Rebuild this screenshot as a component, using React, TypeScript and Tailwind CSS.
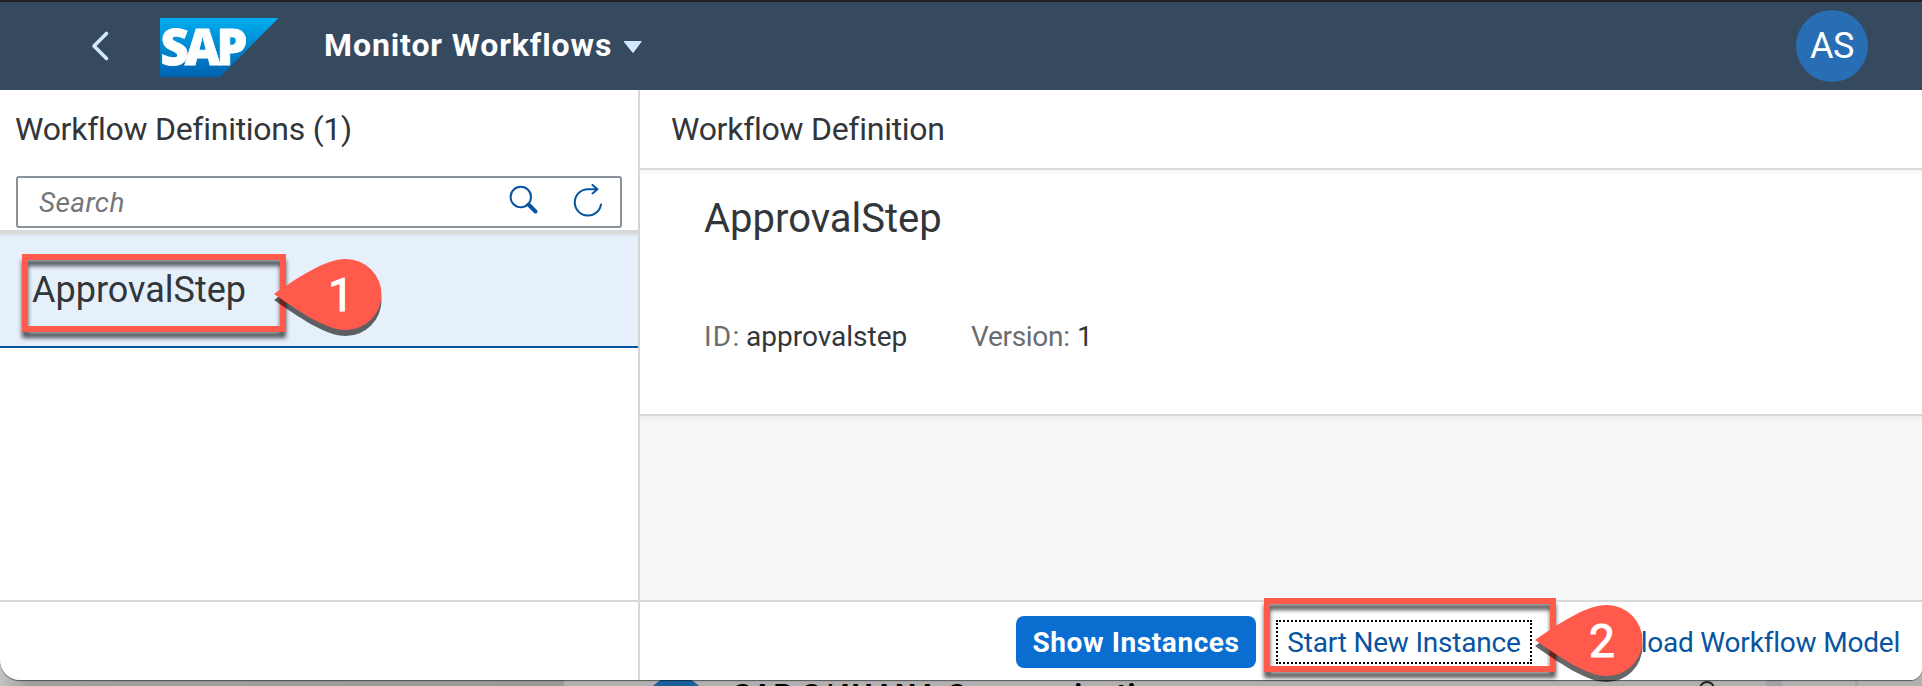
import React from 'react';

function Pin({ label, className }: { label: string; className: string }) {
  return (
    <svg className={className} width="108" height="82" viewBox="0 0 108 82">
      <path
        d="M0 41 C25 24 51 6 72 6 A35.5 35.5 0 0 1 72 77 C51 77 25 58 0 41Z"
        fill="#000"
        opacity="0.6"
      />
      <path
        d="M0 35 C25 18 51 0 72 0 A35.5 35.5 0 0 1 72 71 C51 71 25 52 0 35Z"
        fill="#ff5a4c"
      />
      <text x="67" y="52" textAnchor="middle" fontSize="46" fontWeight="400" stroke="#fff" strokeWidth="1" fill="#fff" fontFamily="Roboto, sans-serif">
        {label}
      </text>
    </svg>
  );
}

function Header() {
  return (
    <header className="flex h-[90px] shrink-0 items-center border-t-2 border-[#222222] bg-[#354a5f] pb-[2px] pl-[90px] pr-[54px]">
      <svg className="mt-[2px]" width="20" height="32" viewBox="0 0 20 32" fill="none" stroke="#d1e8ff" strokeWidth="3.6" strokeLinecap="round" strokeLinejoin="round">
        <path d="M16.5 3.5 L4 16 L16.5 28.5" />
      </svg>
      <svg className="ml-[50px] mt-[5px]" width="119" height="59" viewBox="0 0 119 59">
        <defs>
          <linearGradient id="logoFill" x1="0" y1="0" x2="0" y2="1">
            <stop offset="0" stopColor="#00aeef" />
            <stop offset="0.5" stopColor="#0087cf" />
            <stop offset="1" stopColor="#0062b1" />
          </linearGradient>
        </defs>
        <path d="M0 0 H118.5 L60 59 H0Z" fill="url(#logoFill)" />
        <text x="0.5" y="46.5" fontSize="49" fontWeight="900" fill="#fff" stroke="#fff" strokeWidth="0.8" fontFamily="'Noto Sans', sans-serif" textLength="87" lengthAdjust="spacing">
          SAP
        </text>
      </svg>
      <h1 className="ml-[45px] w-[299px] whitespace-nowrap text-[32px] font-bold leading-none tracking-[0.9px] text-white">Monitor Workflows</h1>
      <svg className="mt-[3px]" width="20" height="14" viewBox="0 0 20 14">
        <path d="M1.5 1 H18 Q19 1 18.4 2 L10.6 12.4 Q10 13.2 9.4 12.4 L1 2 Q0.6 1 1.5 1Z" fill="#d1e8ff" />
      </svg>
      <div className="ml-auto mt-[2px] flex size-[72px] items-center justify-center rounded-full bg-[#286eb4] text-[36px] leading-none tracking-[-0.5px] text-white">AS</div>
    </header>
  );
}

function ListPane() {
  return (
    <aside className="flex w-[640px] shrink-0 flex-col border-r-2 border-[#d9d9d9] bg-white">
      <h2 className="flex h-[86px] shrink-0 items-center pb-[8px] pl-[15px] text-[32px] leading-none tracking-[-0.27px]">Workflow Definitions (1)</h2>
      <div className="h-[58px] shrink-0 border-b-4 border-[#d9d9d9] px-4">
        <div className="flex h-[52px] items-center rounded-[3px] border-2 border-[#89919a] pl-[21px] pr-[15px]">
          <span className="grow pt-px text-[28px] italic leading-none tracking-[0.4px] text-[#74777a]">Search</span>
          <svg width="98" height="36" viewBox="507 184 98 36" fill="none" stroke="#0854a0" strokeWidth="2" strokeLinecap="round" strokeLinejoin="round">
            <circle cx="520.8" cy="197" r="10.2" />
            <path d="M528.5 204.5 L535.5 211.5" strokeWidth="4" />
            <path d="M601 204.5 A13.2 13.2 0 1 1 588 189.2 H597.5 M592.5 185 L597.5 189.2 L592.5 193.4" />
          </svg>
        </div>
      </div>
      <div className="relative flex h-[114px] shrink-0 items-center border-b-2 border-[#0854a0] bg-[#e5f0fa] pl-[32px] text-[36px] leading-none shadow-[inset_0_5px_4px_-3px_rgba(0,0,0,0.06)]">
        ApprovalStep
        <div className="absolute left-[22px] top-[20px] h-[78px] w-[264px] border-6 border-[#ff5a4c] drop-shadow-[0_6px_2px_rgba(0,0,0,0.65)]" />
        <Pin label="1" className="absolute left-[274px] top-[25px]" />
      </div>
      <div className="grow" />
      <div className="h-[80px] shrink-0 border-t-2 border-[#d9d9d9]" />
    </aside>
  );
}

function DetailPane() {
  return (
    <main className="flex min-w-0 grow flex-col bg-[#f7f7f7]">
      <h2 className="flex h-[80px] shrink-0 items-center border-b-2 border-[#d9d9d9] bg-white pl-[31px] text-[32px] leading-none tracking-[-0.27px]">Workflow Definition</h2>
      <section className="flex h-[246px] shrink-0 flex-col border-b-2 border-[#d9d9d9] bg-white pl-[64px] shadow-[0_3px_5px_rgba(0,0,0,0.05),inset_0_6px_5px_-4px_rgba(0,0,0,0.05)]">
        <h3 className="mt-[29px] text-[40px] leading-[40px]">ApprovalStep</h3>
        <div className="mt-[82px] flex items-center text-[28px] leading-[32px]">
          <span className="w-[42px] tracking-[1.2px] text-[#6a6d70]">ID:</span>
          <span className="w-[225px]">approvalstep</span>
          <span className="w-[106px] tracking-[-0.3px] text-[#6a6d70]">Version:</span>
          <span>1</span>
        </div>
      </section>
      <div className="grow" />
      <footer className="relative flex h-[80px] shrink-0 items-center border-t-2 border-[#d9d9d9] bg-white pl-[376px] pr-[22px] text-[28px] leading-none">
        <button className="mt-[2px] flex h-[52px] w-[240px] items-center justify-center rounded-[8px] bg-[#0a6ed1] pt-[2px] font-bold tracking-[0.6px] text-white">Show Instances</button>
        <button className="ml-[20px] mt-[2px] flex h-[44px] w-[256px] items-center justify-center whitespace-nowrap border-2 border-dotted border-black pt-[2px] tracking-[-0.2px] text-[#0854a0]">Start New Instance</button>
        <button className="ml-auto mt-[4px] whitespace-nowrap tracking-[-0.2px] text-[#0854a0]">Download Workflow Model</button>
        <div className="absolute left-[624px] top-[-4px] h-[74px] w-[292px] border-6 border-[#ff5a4c] drop-shadow-[0_6px_2px_rgba(0,0,0,0.65)]" />
        <Pin label="2" className="absolute left-[895px] top-[3px]" />
      </footer>
    </main>
  );
}

export default function App() {
  return (
    <div className="relative h-[686px] w-full overflow-hidden bg-[#b0b0b0] font-['Roboto',sans-serif] text-[#32363a]">
      <div className="absolute bottom-0 left-0 h-[40px] w-[564px] bg-linear-to-r from-[#c2c4c2] via-[#9fa09f] via-5% to-[#989a98]" />
      <div className="absolute left-[645px] top-[676px] size-[62px] rounded-full bg-[#1b5f9b]" />
      <div className="absolute left-[733px] top-[678px] whitespace-nowrap text-[30px] font-bold leading-[34px] tracking-[0.9px] text-black">SAP S/4HANA Communication</div>
      <div className="absolute left-[1699px] top-[681px] size-[16px] rounded-full border-2 border-[#222222]" />
      <div className="absolute left-[1766px] top-[680px] h-[6px] w-[16px] bg-[#a3a3a5]" />
      <div className="absolute left-[1855px] top-[680px] h-[6px] w-[3px] bg-[#a3a3a5]" />
      <div className="relative flex h-[680px] flex-col rounded-bl-[20px] rounded-br-[12px] shadow-[0_1px_1px_rgba(0,0,0,0.5)]">
        <Header />
        <div className="flex min-h-0 grow [&>aside]:rounded-bl-[20px] [&>main]:rounded-br-[12px] [&>main>footer]:rounded-br-[12px]">
          <ListPane />
          <DetailPane />
        </div>
      </div>
    </div>
  );
}
